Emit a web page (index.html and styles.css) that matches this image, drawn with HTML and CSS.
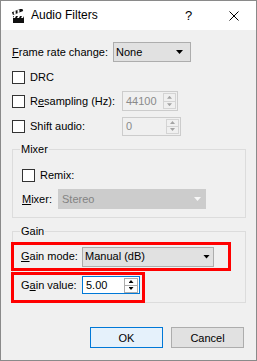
FILE: index.html
```html
<!DOCTYPE html>
<html>
<head>
<meta charset="utf-8">
<link rel="stylesheet" href="styles.css">
</head>
<body>
<div class="window">
  <div class="titlebar">
    <svg class="app-icon" width="14" height="14" viewBox="0 0 14 14">
      <rect x="2" y="7" width="11" height="7" fill="#111"/>
      <path d="M3 7h2l-1 2H2zM7 7h2l-1 2H6zM11 7h2l-1 2h-2z" fill="#fff"/>
      <g transform="rotate(-22 2 6)">
        <rect x="2" y="3" width="11" height="3" fill="#111"/>
        <path d="M4 3h2l-1 3H3zM8 3h2l-1 3H7z" fill="#fff"/>
      </g>
    </svg>
    <span class="title">Audio Filters</span>
    <span class="cap-btn help">?</span>
    <span class="cap-btn close">
      <svg width="10" height="10" viewBox="0 0 10 10"><path d="M0.5 0.5L9.5 9.5M9.5 0.5L0.5 9.5" stroke="#000" stroke-width="1" fill="none"/></svg>
    </span>
  </div>
  <div class="content">
    <div class="row r-frame">
      <span class="lbl-frame"><u>F</u>rame rate change:</span>
      <div class="combo combo-frame"><span class="cval">None</span><span class="arrow"></span></div>
    </div>
    <div class="row r-drc">
      <span class="check"></span><span>DRC</span>
    </div>
    <div class="row r-resamp">
      <span class="check"></span><span class="lbl-check">R<u>e</u>sampling (Hz):</span>
      <div class="spin disabled spin-resamp"><span class="sval">44100</span><span class="btns"><span class="up"></span><span class="down"></span></span></div>
    </div>
    <div class="row r-shift">
      <span class="check"></span><span class="lbl-check">Shift audio:</span>
      <div class="spin disabled spin-shift"><span class="sval">0</span><span class="btns"><span class="up"></span><span class="down"></span></span></div>
    </div>
    <fieldset class="group group-mixer">
      <legend>Mixer</legend>
      <div class="row r-remix"><span class="check"></span><span>Remix:</span></div>
      <div class="row r-mixer">
        <span class="lbl-mixer"><u>M</u>ixer:</span>
        <div class="combo combo-mixer disabled"><span class="cval">Stereo</span><span class="arrow"></span></div>
      </div>
    </fieldset>
    <fieldset class="group group-gain">
      <legend>Gain</legend>
      <div class="mark mark-mode">
        <span class="lbl-gain"><u>G</u>ain mode:</span>
        <div class="combo combo-gain"><span class="cval">Manual (dB)</span><span class="arrow"></span></div>
      </div>
      <div class="mark mark-value">
        <span class="lbl-gain lbl-value">G<u>a</u>in value:</span>
        <div class="spin spin-gain"><span class="sval">5.00</span><span class="btns"><span class="up"></span><span class="down"></span></span></div>
      </div>
    </fieldset>
    <div class="buttons">
      <button class="btn primary">OK</button>
      <button class="btn">Cancel</button>
    </div>
  </div>
</div>
</body>
</html>
```
FILE: styles.css
```css
* { box-sizing: border-box; }
html, body { margin: 0; padding: 0; }
body {
  width: 257px;
  height: 361px;
  font-family: "Liberation Sans", Arial, sans-serif;
  font-size: 11px;
  line-height: 13px;
  color: #000;
  background: #fff;
}
u { text-decoration: underline; text-underline-offset: 1px; }

.window {
  width: 257px;
  height: 361px;
  border: 1px solid #8a8a8a;
  background: #f0f0f0;
  display: flex;
  flex-direction: column;
}

.titlebar {
  flex: none;
  height: 29px;
  background: #fff;
  display: flex;
  align-items: center;
  padding-left: 10px;
}
.app-icon { flex: none; margin-top: 1px; }
.title { flex: 1; margin-left: 6px; font-size: 12px; }
.cap-btn {
  width: 45px;
  height: 29px;
  display: flex;
  align-items: center;
  justify-content: center;
  font-size: 13px;
}

.content {
  flex: 1;
  padding: 12px 10px 0 11px;
}

.row { display: flex; align-items: center; height: 20px; }
.r-drc { margin-top: 5px; }
.r-resamp { margin-top: 4px; }
.r-shift { margin-top: 5px; }

.lbl-frame { width: 101px; flex: none; }
.check {
  flex: none;
  width: 13px;
  height: 13px;
  border: 1px solid #333;
  background: #fff;
  margin-right: 5px;
}
.lbl-check { width: 92px; flex: none; }

.combo {
  flex: none;
  display: flex;
  align-items: center;
  height: 20px;
  border: 1px solid #adadad;
  background: #e1e1e1;
  padding-left: 2px;
}
.combo .cval { flex: 1; }
.combo .arrow {
  width: 7px;
  height: 4px;
  background: #000;
  clip-path: polygon(0 0, 100% 0, 50% 100%);
}
.combo-frame { width: 78px; padding-right: 7px; }
.combo-gain { width: 132px; padding-right: 3px; }
.combo-mixer { width: 148px; padding-right: 4px; padding-left: 3px; }
.combo.disabled { background: #cccccc; border-color: #cccccc; color: #838383; }
.combo.disabled .arrow { background: #f7f7f7; }

.spin {
  flex: none;
  display: flex;
  align-items: center;
  height: 20px;
  border: 1px solid #cccccc;
  padding-left: 3px;
}
.spin .sval { flex: 1; }
.spin .btns {
  flex: none;
  width: 13px;
  height: 16px;
  margin-right: 1px;
  border: 1px solid #d4d4d4;
  display: flex;
  flex-direction: column;
}
.btns .up, .btns .down {
  flex: 1;
  display: flex;
  align-items: center;
  justify-content: center;
}
.btns .up { border-bottom: 1px solid #d4d4d4; }
.btns .up::before, .btns .down::before {
  content: "";
  width: 5px;
  height: 3px;
  background: #a3a3a3;
}
.btns .up::before { clip-path: polygon(50% 0, 100% 100%, 0 100%); }
.btns .down::before { clip-path: polygon(0 0, 100% 0, 50% 100%); }
.spin.disabled { color: #8a8a8a; }
.spin-resamp { width: 56px; }
.spin-shift { width: 59px; height: 19px; }
.spin-shift .btns { height: 15px; }

.group {
  margin: 6px 0 0 0;
  padding: 0 10px 8px 9px;
  border: 1px solid #dcdcdc;
  width: 234px;
  min-width: 0;
}
.group legend {
  padding: 0 1px;
  margin-left: -2px;
  line-height: 14px;
}
.r-remix { margin-top: 9px; }
.r-mixer { margin-top: 4px; }
.lbl-mixer { width: 36px; flex: none; }

.group-gain { padding-bottom: 0; }
.mark {
  display: flex;
  align-items: center;
  margin-left: -11px;
  border: 3px solid #ff0000;
  padding-left: 7px;
}
.mark-mode { margin-top: 4px; width: 220px; height: 29px; }
.mark-value {
  margin-top: 1px;
  width: 134px;
  height: 31px;
  margin-bottom: -1px;
  align-items: flex-start;
  padding-top: 1px;
}
.lbl-gain { width: 61px; flex: none; }
.lbl-value { line-height: 18px; }
.spin-gain {
  width: 58px;
  height: 18px;
  border-color: #0078d7;
  background: #fff;
}
.spin-gain .btns { width: 14px; height: 15px; border-color: #adadad; }
.spin-gain .btns .up { border-bottom-color: #adadad; }
.spin-gain .btns .up::before, .spin-gain .btns .down::before { background: #000; }

.buttons {
  display: flex;
  justify-content: flex-end;
  gap: 8px;
  margin-top: 24px;
  margin-right: 2px;
}
.btn {
  width: 73px;
  height: 21px;
  padding: 0;
  font-family: "Liberation Sans", Arial, sans-serif;
  font-size: 11px;
  color: #000;
  border: 1px solid #adadad;
  background: #e1e1e1;
}
.btn.primary { border-color: #0078d7; background: #e5f1fb; }
```
